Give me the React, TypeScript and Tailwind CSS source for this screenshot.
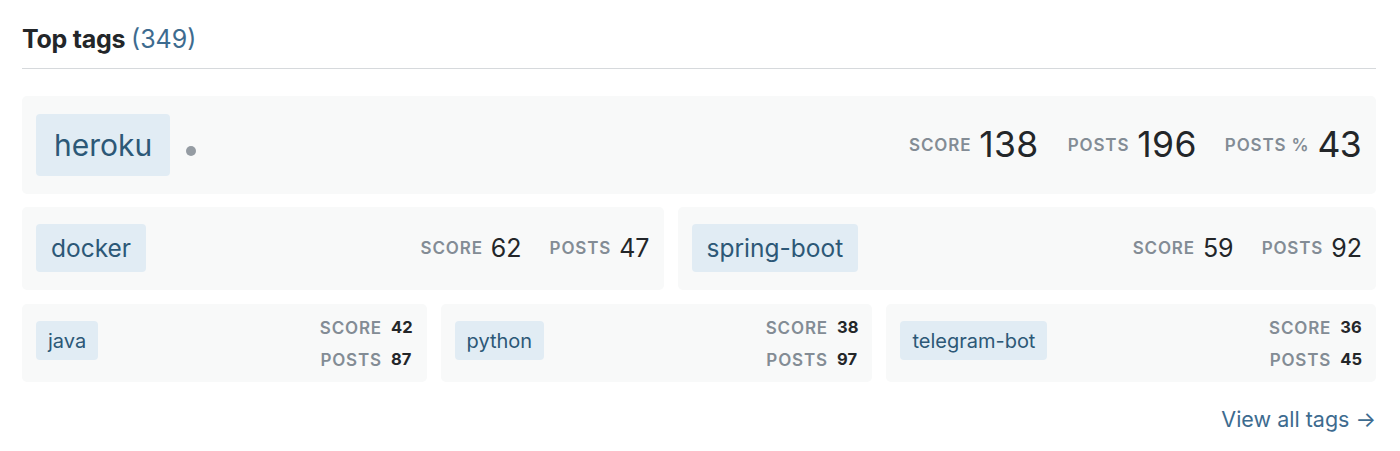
import React from 'react';

type Tag = { name: string; score: number; posts: number };

const font = { fontFamily: 'Inter, "Liberation Sans", sans-serif' };

// Etiqueta de tag en tres tamaños
function TagChip({ name, size }: { name: string; size: 'lg' | 'md' | 'sm' }) {
  const sizes = {
    lg: 'h-[62px] px-[18px] text-[30px] rounded-[4px]',
    md: 'h-[48px] px-[15px] text-[24.5px] rounded-[4px]',
    sm: 'h-[39px] px-[12px] text-[20px] rounded-[4px] -mt-[5px]',
  };
  return (
    <a className={`flex items-center bg-[#e1ecf4] text-[#2c5877] whitespace-nowrap ${sizes[size]}`}>
      {name}
    </a>
  );
}

function Label({ children }: { children: React.ReactNode }) {
  return (
    <span className="relative top-[1px] text-[17px] font-semibold uppercase tracking-[0.05em] text-[#838c95]">
      {children}
    </span>
  );
}

export default function App() {
  const top = { name: 'heroku', score: 138, posts: 196, pct: 43 };
  const second: Tag[] = [
    { name: 'docker', score: 62, posts: 47 },
    { name: 'spring-boot', score: 59, posts: 92 },
  ];
  const third: Tag[] = [
    { name: 'java', score: 42, posts: 87 },
    { name: 'python', score: 38, posts: 97 },
    { name: 'telegram-bot', score: 36, posts: 45 },
  ];

  return (
    <main className="min-h-[451px] bg-white pl-[22px] pr-[24px] pt-[24px]" style={font}>
      {/* Encabezado */}
      <div className="border-b border-[#d6d9dc] pb-[14px]">
        <h2 className="text-[25px] leading-[30px] font-bold tracking-[-0.01em] text-[#232629]">
          Top tags <span className="font-normal tracking-normal text-[#3d6b8f]">(349)</span>
        </h2>
      </div>

      <div className="mt-[27px] flex flex-col">
        {/* Tag principal */}
        <div className="flex items-center rounded-[5px] bg-[#f8f9f9] pl-[14px] pr-[15px] py-[18px]">
          <TagChip name={top.name} size="lg" />
          <span className="ml-4 mt-3 h-[10px] w-[10px] rounded-full bg-[#959ca3]" />
          <div className="ml-auto flex items-center text-[#232629]">
            <Label>Score</Label>
            <span className="ml-2 text-[35.5px] leading-none tracking-[0.01em]">{top.score}</span>
            <span className="ml-[29px]"><Label>Posts</Label></span>
            <span className="ml-2 text-[35.5px] leading-none tracking-[0.01em]">{top.posts}</span>
            <span className="ml-[28px]"><Label>Posts %</Label></span>
            <span className="ml-2 text-[35.5px] leading-none tracking-[-0.02em]">{top.pct}</span>
          </div>
        </div>

        {/* Segunda fila */}
        <div className="mt-[13px] flex gap-[14px]">
          {second.map((t) => (
            <div key={t.name} className="flex flex-auto items-center rounded-[5px] bg-[#f8f9f9] px-[14px] pt-[17px] pb-[18px]">
              <TagChip name={t.name} size="md" />
              <div className="ml-auto flex items-center text-[#232629]">
                <Label>Score</Label>
                <span className="ml-2 text-[25px] leading-none">{t.score}</span>
                <span className="ml-[28px]"><Label>Posts</Label></span>
                <span className="ml-2 text-[25px] leading-none">{t.posts}</span>
              </div>
            </div>
          ))}
        </div>

        {/* Tercera fila */}
        <div className="mt-[14px] flex gap-[14px]">
          {third.map((t) => (
            <div key={t.name} className="flex flex-auto items-center rounded-[5px] bg-[#f8f9f9] px-[14px] py-[11px]">
              <TagChip name={t.name} size="sm" />
              <div className="ml-auto grid grid-cols-[auto_auto] gap-x-[9px] gap-y-2 leading-[24px]">
                <span className="text-right"><Label>Score</Label></span>
                <span className="text-[16.5px] font-bold text-[#232629]">{t.score}</span>
                <span className="text-right"><Label>Posts</Label></span>
                <span className="text-[16.5px] font-bold text-[#232629]">{t.posts}</span>
              </div>
            </div>
          ))}
        </div>
      </div>

      <div className="mt-[23px] flex justify-end">
        <a className="text-[21.5px] leading-[28px] text-[#3d6b8f]">View all tags →</a>
      </div>
    </main>
  );
}
